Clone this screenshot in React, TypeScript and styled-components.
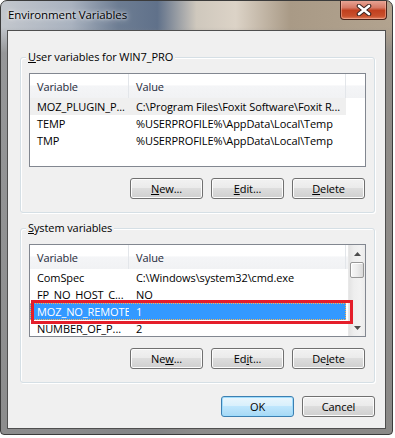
import styled, { createGlobalStyle } from "styled-components";

const GlobalStyle = createGlobalStyle`
  * { box-sizing: border-box; }
  html, body { margin: 0; padding: 0; background: #ffffff; }
  body {
    font-family: "Open Sans", "Noto Sans", sans-serif;
    font-size: 11px;
    letter-spacing: -0.1px;
    color: #000;
  }
`;

const Window = styled.div`
  position: relative;
  width: 393px;
  height: 435px;
  border: 1px solid #3b3b3b;
  border-radius: 7px 7px 4px 4px;
  background:
    linear-gradient(180deg, rgba(255, 255, 255, 0) 0%, rgba(255, 255, 255, 0) 6%, rgba(135, 135, 135, 0.75) 12%, rgba(135, 135, 135, 0.92) 100%),
    linear-gradient(90deg, #c3c7cd 0%, #a9b2bf 18%, #6d7d93 30%, #60718a 40%, #cfc8bd 50%, #dcd3c7 60%, #a99a86 74%, #b2a38f 100%);
  overflow: hidden;
`;

const TitleBar = styled.div`
  height: 29px;
  display: flex;
  align-items: flex-start;
  justify-content: space-between;
  padding-left: 7px;
`;

const Title = styled.span`
  margin-top: 6px;
  font-size: 11.5px;
  color: #000;
  text-shadow: 0 0 6px rgba(255, 255, 255, 0.9), 0 0 3px rgba(255, 255, 255, 0.8);
`;

const CloseButton = styled.div`
  width: 47px;
  height: 20px;
  margin-right: 5px;
  margin-top: -1px;
  border: 1px solid #4a231b;
  border-top: none;
  border-radius: 0 0 4px 4px;
  background: linear-gradient(180deg, #e9a99a 0%, #d77a66 40%, #c1401f 55%, #c9502c 85%, #e08060 100%);
  box-shadow: inset 0 0 0 1px rgba(255, 200, 180, 0.45);
  display: flex;
  align-items: center;
  justify-content: center;
`;

const Client = styled.div`
  width: 379px;
  height: 399px;
  margin-left: 6px;
  border: 1px solid #4f4f4f;
  background: #f0f0f0;
  padding: 26px 0 0 12px;
  display: flex;
  flex-direction: column;
`;

const GroupBox = styled.div<{ $top: number }>`
  position: relative;
  width: 355px;
  margin-top: ${(p) => p.$top}px;
  border: 1px solid #d5dfe5;
  border-radius: 3px;
  padding: 15px 8px 13px 8px;
  box-shadow: inset 1px 1px 0 #ffffff, 1px 1px 0 #ffffff;
  display: flex;
  flex-direction: column;
  gap: 11px;
`;

const GroupLabel = styled.span`
  position: absolute;
  top: -9px;
  left: 5px;
  padding: 0 2px;
  background: #f0f0f0;
  line-height: 16px;
`;

const ListView = styled.div<{ $height: number }>`
  position: relative;
  width: 337px;
  height: ${(p) => p.$height}px;
  border: 1px solid #828790;
  background: #ffffff;
  display: flex;
  overflow: hidden;
`;

const ListBody = styled.div`
  flex: 1;
  display: flex;
  flex-direction: column;
  min-width: 0;
`;

const Header = styled.div`
  height: 24px;
  flex: none;
  display: grid;
  grid-template-columns: 99px 217px 1fr;
  background: linear-gradient(180deg, #ffffff 0%, #ffffff 45%, #f4f5f7 50%, #f1f2f4 100%);
`;

const HeaderCell = styled.div`
  display: flex;
  align-items: center;
  padding-left: 7px;
  border-right: 1px solid #e3e6ea;
  color: #1e2a3a;
  &:last-child { border-right: none; }
`;

const Row = styled.div<{ $state?: "hover" | "selected" }>`
  height: 17px;
  flex: none;
  display: grid;
  grid-template-columns: 99px 1fr;
  align-items: center;
  width: 316px;
  white-space: nowrap;
  background: ${(p) =>
    p.$state === "selected" ? "#3399ff" : p.$state === "hover" ? "#efefef" : "transparent"};
  color: ${(p) => (p.$state === "selected" ? "#ffffff" : "#000000")};
  outline: ${(p) => (p.$state === "selected" ? "1px dotted #f5b35a" : "none")};
  outline-offset: -1px;
`;

const Cell = styled.span`
  padding-left: 7px;
  overflow: hidden;
`;

const ScrollBar = styled.div`
  width: 17px;
  flex: none;
  display: flex;
  flex-direction: column;
  background: linear-gradient(90deg, #e3e3e3 0%, #eeeeee 30%, #f2f2f2 70%, #ebebeb 100%);
  border-left: 1px solid #e8e8e8;
`;

const ScrollArrow = styled.div`
  height: 17px;
  display: flex;
  align-items: center;
  justify-content: center;
`;

const Thumb = styled.div`
  height: 16px;
  margin: 0 1px;
  border: 1px solid #979797;
  border-radius: 2px;
  background: linear-gradient(90deg, #f7f7f7 0%, #ececec 50%, #d9d9d9 100%);
  box-shadow: inset 1px 1px 0 #ffffff;
`;

const Track = styled.div`
  flex: 1;
`;

const Highlight = styled.div`
  position: absolute;
  left: 1px;
  top: 55px;
  width: 322px;
  height: 24px;
  border: 3px solid #e41e2a;
  pointer-events: none;
`;

const ButtonRow = styled.div`
  display: flex;
  justify-content: flex-end;
  gap: 8px;
  padding-right: 1px;
`;

const Button = styled.button<{ $default?: boolean }>`
  width: 73px;
  height: 21px;
  padding: 0;
  font: inherit;
  letter-spacing: inherit;
  color: #000;
  border: 1px solid ${(p) => (p.$default ? "#3c7fb1" : "#707070")};
  border-radius: 3px;
  background: ${(p) =>
    p.$default
      ? "linear-gradient(180deg, #eaf6fd 0%, #d9f0fc 45%, #bee6fd 50%, #a7d9f5 100%)"
      : "linear-gradient(180deg, #f2f2f2 0%, #ebebeb 45%, #dddddd 50%, #cfcfcf 100%)"};
  box-shadow: inset 0 0 0 1px ${(p) => (p.$default ? "#9fdcfc" : "#fcfcfc")};
  line-height: 17px;
`;

const Footer = styled.div`
  display: flex;
  justify-content: flex-end;
  gap: 8px;
  margin-top: 13px;
  width: 355px;
`;

const CloseGlyph = () => (
  <svg width="16" height="12" viewBox="0 0 16 12">
    <path d="M3 2 L13 10 M13 2 L3 10" stroke="#3b2420" strokeWidth="4.6" strokeLinecap="round" />
    <path d="M3 2 L13 10 M13 2 L3 10" stroke="#ffffff" strokeWidth="2.6" strokeLinecap="round" />
  </svg>
);

const Arrow = ({ up }: { up?: boolean }) => (
  <svg width="7" height="4" viewBox="0 0 7 4">
    <path d={up ? "M0 4 L3.5 0 L7 4 Z" : "M0 0 L3.5 4 L7 0 Z"} fill="#4d4d4d" />
  </svg>
);

interface Variable {
  name: string;
  value: string;
  state?: "hover" | "selected";
}

const userVars: Variable[] = [
  { name: "MOZ_PLUGIN_P...", value: "C:\\Program Files\\Foxit Software\\Foxit R...", state: "hover" },
  { name: "TEMP", value: "%USERPROFILE%\\AppData\\Local\\Temp" },
  { name: "TMP", value: "%USERPROFILE%\\AppData\\Local\\Temp" },
];

const systemVars: Variable[] = [
  { name: "ComSpec", value: "C:\\Windows\\system32\\cmd.exe" },
  { name: "FP_NO_HOST_C...", value: "NO" },
  { name: "MOZ_NO_REMOTE", value: "1", state: "selected" },
  { name: "NUMBER_OF_P...", value: "2" },
];

const VarRows = ({ vars }: { vars: Variable[] }) => (
  <>
    {vars.map((v) => (
      <Row key={v.name} $state={v.state}>
        <Cell>{v.name}</Cell>
        <Cell>{v.value}</Cell>
      </Row>
    ))}
  </>
);

const ListHeader = () => (
  <Header>
    <HeaderCell>Variable</HeaderCell>
    <HeaderCell>Value</HeaderCell>
    <HeaderCell />
  </Header>
);

export default function App() {
  return (
    <>
      <GlobalStyle />
      <Window>
        <TitleBar>
          <Title>Environment Variables</Title>
          <CloseButton>
            <CloseGlyph />
          </CloseButton>
        </TitleBar>
        <Client>
          <GroupBox $top={0}>
            <GroupLabel>
              <u>U</u>ser variables for WIN7_PRO
            </GroupLabel>
            <ListView $height={94}>
              <ListBody>
                <ListHeader />
                <VarRows vars={userVars} />
              </ListBody>
            </ListView>
            <ButtonRow>
              <Button><u>N</u>ew...</Button>
              <Button><u>E</u>dit...</Button>
              <Button><u>D</u>elete</Button>
            </ButtonRow>
          </GroupBox>

          <GroupBox $top={15}>
            <GroupLabel>
              <u>S</u>ystem variables
            </GroupLabel>
            <ListView $height={93}>
              <ListBody>
                <ListHeader />
                <VarRows vars={systemVars} />
              </ListBody>
              <ScrollBar>
                <ScrollArrow><Arrow up /></ScrollArrow>
                <Thumb />
                <Track />
                <ScrollArrow><Arrow /></ScrollArrow>
              </ScrollBar>
              <Highlight />
            </ListView>
            <ButtonRow>
              <Button>Ne<u>w</u>...</Button>
              <Button>Ed<u>i</u>t...</Button>
              <Button>De<u>l</u>ete</Button>
            </ButtonRow>
          </GroupBox>

          <Footer>
            <Button $default>OK</Button>
            <Button>Cancel</Button>
          </Footer>
        </Client>
      </Window>
    </>
  );
}
